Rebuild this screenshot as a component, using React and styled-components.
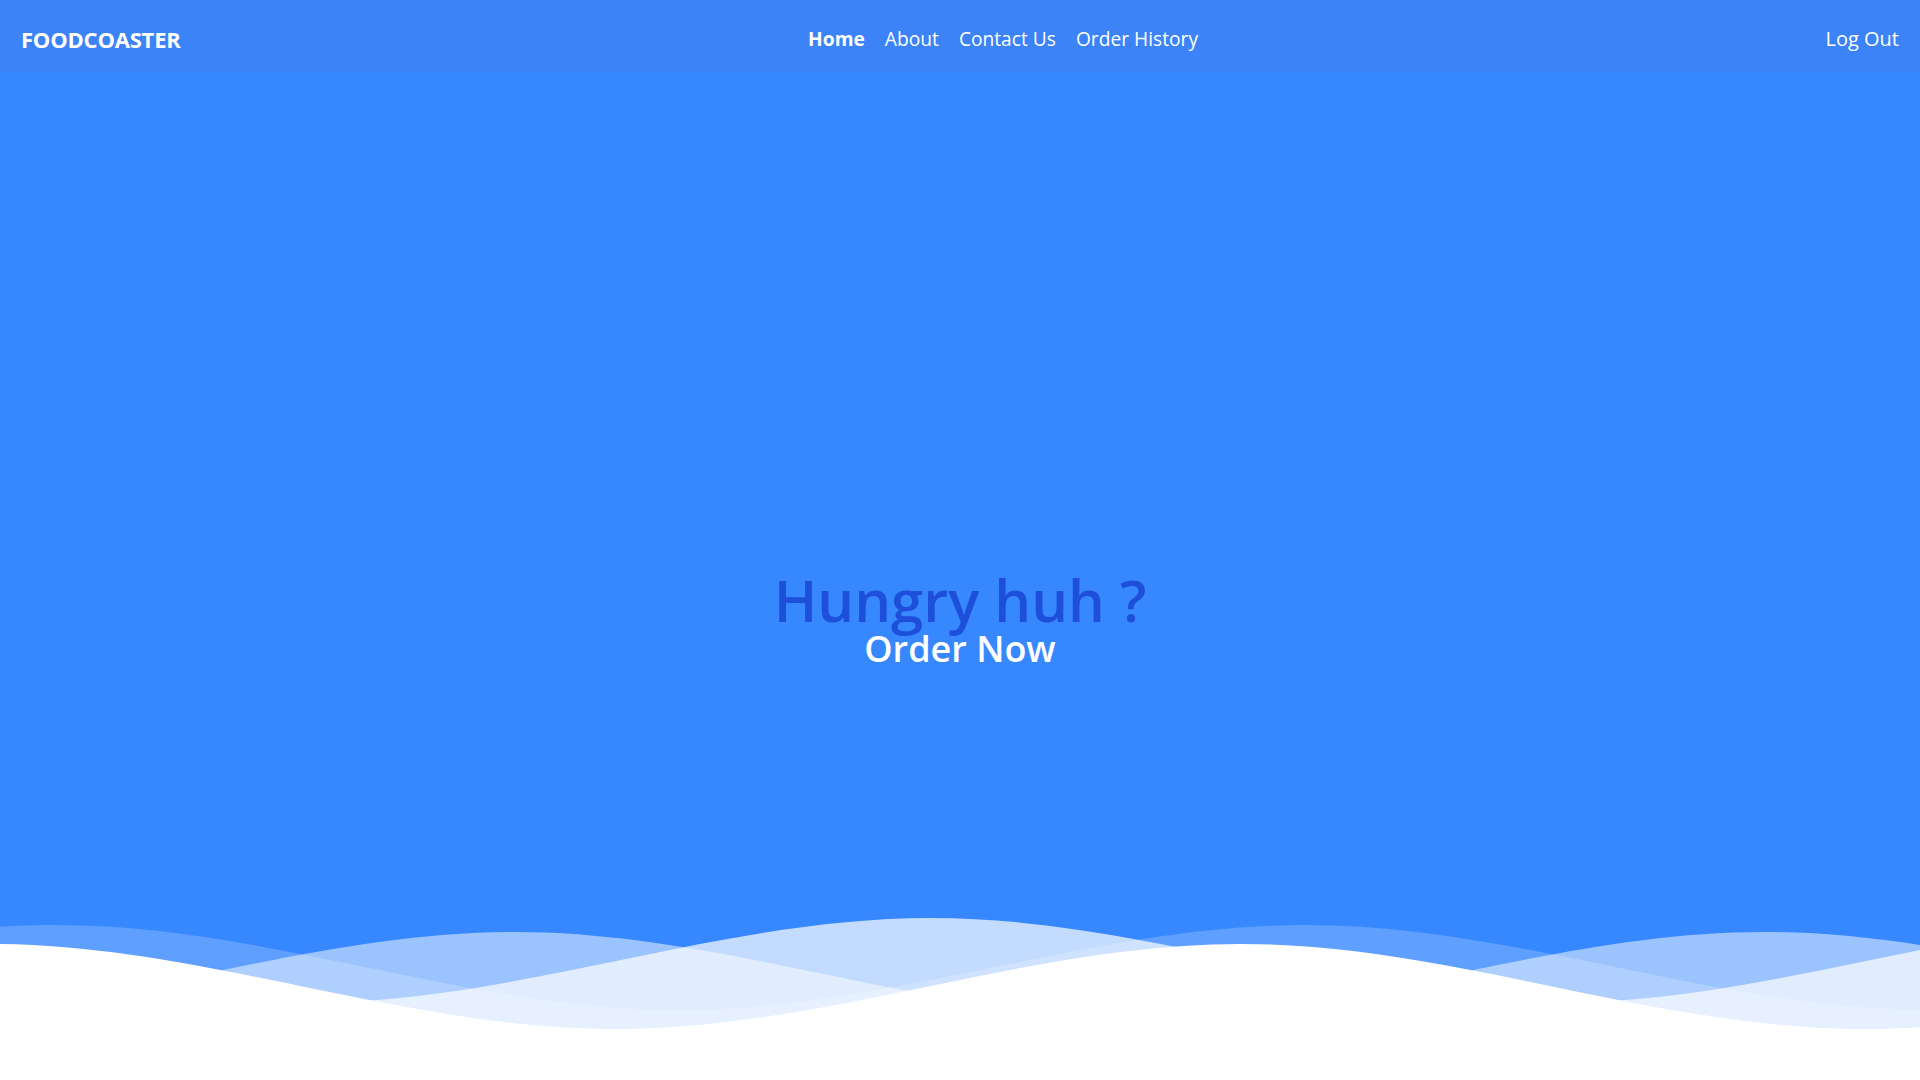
import React from "react";
import styled, { createGlobalStyle } from "styled-components";

const GlobalStyle = createGlobalStyle`
  html, body { margin: 0; padding: 0; }
  body {
    font-family: "Open Sans", "Noto Sans", "Liberation Sans", sans-serif;
    background: #ffffff;
  }
  * { box-sizing: border-box; }
`;

const Page = styled.div`
  min-height: 100vh;
  display: flex;
  flex-direction: column;
  background: #3788ff;
`;

const NavBar = styled.nav`
  height: 71px;
  padding: 6px 21px 0 21px;
  display: flex;
  align-items: center;
  justify-content: space-between;
  background: #3b83f6;
  color: #ffffff;
`;

const Brand = styled.a`
  font-size: 22px;
  font-weight: 700;
  letter-spacing: -0.2px;
  color: #ffffff;
  text-decoration: none;
`;

const Links = styled.ul`
  display: flex;
  gap: 20px;
  list-style: none;
  margin: 0;
  padding: 0;
`;

const NavLink = styled.a`
  font-size: ${(p) => (p.$small ? "19.2px" : "20px")};
  font-weight: ${(p) => (p.$active ? 700 : 400)};
  color: #ffffff;
  text-decoration: none;
`;

const Hero = styled.main`
  flex: 1;
  display: flex;
  flex-direction: column;
  align-items: center;
  justify-content: center;
  padding-top: 268px;
`;

const Title = styled.h1`
  margin: 0;
  font-size: 58px;
  line-height: 1;
  font-weight: 600;
  color: #1d4fdb;
`;

const OrderButton = styled.a`
  font-size: 36px;
  line-height: 40px;
  font-weight: 600;
  color: #ffffff;
  text-decoration: none;
`;

const WaveSvg = styled.svg`
  display: block;
  width: 100%;
  height: 180px;
`;

const layers = [
  { crestX: 931, crestY: 18, fill: "rgba(255,255,255,0.7)" },
  { crestX: 514, crestY: 32, fill: "rgba(255,255,255,0.5)" },
  { crestX: 55, crestY: 25, fill: "rgba(255,255,255,0.2)" },
  { crestX: 1240, crestY: 44, fill: "#ffffff" },
];

function wavePath(crestX, crestY, amp = 85, period = 1250, width = 1920, height = 180) {
  const half = period / 2;
  let x = crestX;
  while (x > 0) x -= period;
  const start = x;
  let d = `M${x} ${crestY}`;
  let down = true;
  while (x < width) {
    const dy = down ? amp : -amp;
    d += ` c${(0.341 * half).toFixed(1)} 0 ${(0.659 * half).toFixed(1)} ${dy} ${half} ${dy}`;
    x += half;
    down = !down;
  }
  d += ` V${height} H${start} Z`;
  return d;
}

function Waves() {
  return (
    <WaveSvg viewBox="0 0 1920 180" preserveAspectRatio="none">
      {layers.map((l, i) => (
        <path key={i} d={wavePath(l.crestX, l.crestY)} fill={l.fill} />
      ))}
    </WaveSvg>
  );
}

export default function App() {
  return (
    <>
      <GlobalStyle />
      <Page>
        <NavBar>
          <Brand href="#">FOODCOASTER</Brand>
          <Links>
            <li><NavLink href="#" $small $active>Home</NavLink></li>
            <li><NavLink href="#" $small>About</NavLink></li>
            <li><NavLink href="#" $small>Contact Us</NavLink></li>
            <li><NavLink href="#" $small>Order History</NavLink></li>
          </Links>
          <NavLink href="#">Log Out</NavLink>
        </NavBar>
        <Hero>
          <Title>Hungry huh ?</Title>
          <OrderButton href="#">Order Now</OrderButton>
        </Hero>
        <Waves />
      </Page>
    </>
  );
}
